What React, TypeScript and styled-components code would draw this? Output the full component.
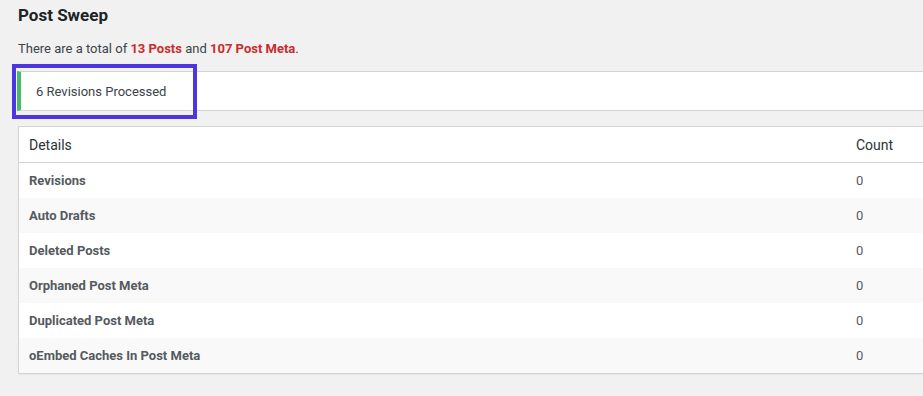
import styled, { createGlobalStyle } from "styled-components"

const GlobalStyle = createGlobalStyle`
  html, body {
    margin: 0;
    padding: 0;
    background: #f1f1f1;
    overflow: hidden;
  }
  body {
    font-family: Roboto, "Liberation Sans", Arial, sans-serif;
    color: #3c434a;
  }
`

const rows = [
  "Revisions",
  "Auto Drafts",
  "Deleted Posts",
  "Orphaned Post Meta",
  "Duplicated Post Meta",
  "oEmbed Caches In Post Meta",
]

export default function App() {
  return (
    <>
      <GlobalStyle />
      <Page>
        <Title>Post Sweep</Title>
        <Summary>
          There are a total of <Highlight>13 Posts</Highlight> and{" "}
          <Highlight>107 Post Meta</Highlight>.
        </Summary>
        <NoticeWrap>
          <Notice>6 Revisions Processed</Notice>
          <Marker />
        </NoticeWrap>
        <Table>
          <HeadRow>
            <HeadCell>Details</HeadCell>
            <HeadCell>Count</HeadCell>
          </HeadRow>
          {rows.map((label, i) => (
            <Row key={label} striped={i % 2 === 1}>
              <Label>{label}</Label>
              <Value>0</Value>
            </Row>
          ))}
        </Table>
      </Page>
    </>
  )
}

const Page = styled.div`
  padding: 5px 0 0 18px;
  width: 960px;
  height: 396px;
  box-sizing: border-box;
`

const Title = styled.h2`
  margin: 0;
  font-size: 17px;
  font-weight: 700;
  color: #1d2327;
  line-height: 20px;
`

const Summary = styled.p`
  margin: 16px 0 0;
  font-size: 13px;
  line-height: 16px;
  color: #3c434a;
`

const Highlight = styled.strong`
  color: #c92c2c;
  font-weight: 700;
`

const NoticeWrap = styled.div`
  position: relative;
  margin-top: 14px;
`

const Notice = styled.div`
  margin-left: -1px;
  background: #fff;
  border-top: 1px solid #d4d4d4;
  border-bottom: 1px solid #d4d4d4;
  border-left: 4px solid #4ab866;
  padding: 0 0 0 15px;
  height: 38px;
  display: flex;
  align-items: center;
  font-size: 13px;
  color: #3c434a;
`

const Marker = styled.div`
  position: absolute;
  left: -6px;
  top: -7px;
  width: 177px;
  height: 47px;
  border: 4px solid #4b36e0;
  pointer-events: none;
`

const Table = styled.div`
  margin-top: 15px;
  background: #fff;
  border: 1px solid #d4d4d4;
  box-shadow: 0 1px 1px rgba(0, 0, 0, 0.04);
`

const HeadRow = styled.div`
  display: grid;
  grid-template-columns: 827px 1fr;
  height: 35px;
  align-items: center;
  border-bottom: 1px solid #d4d4d4;
`

const HeadCell = styled.div`
  padding-left: 10px;
  font-size: 14px;
  color: #2c3338;
`

const Row = styled.div<{ striped: boolean }>`
  display: grid;
  grid-template-columns: 827px 1fr;
  height: 35px;
  align-items: center;
  background: ${p => (p.striped ? "#f9f9f9" : "#fff")};
`

const Label = styled.div`
  padding-left: 10px;
  font-size: 13px;
  font-weight: 700;
  color: #555a60;
`

const Value = styled.div`
  padding-left: 10px;
  font-size: 13px;
  color: #555a60;
`
